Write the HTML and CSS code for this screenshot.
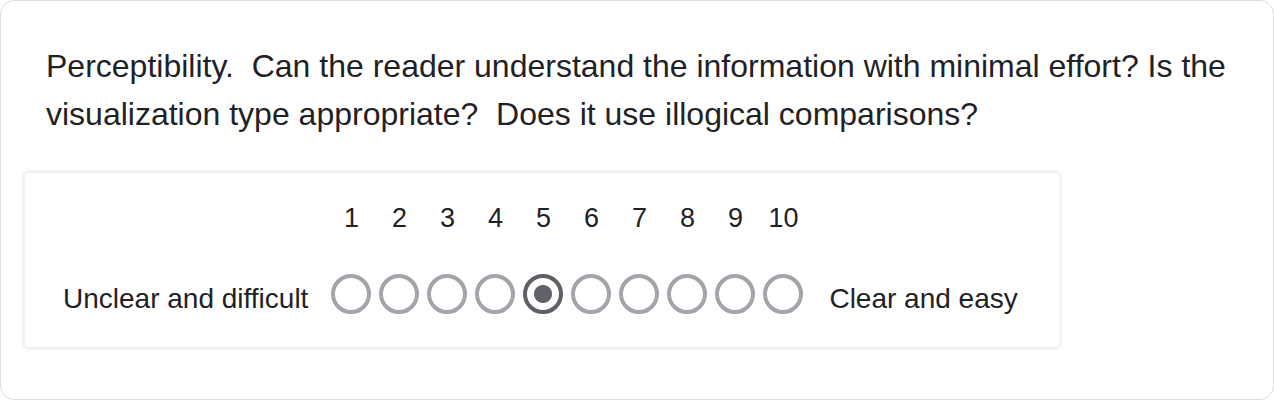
FILE: index.html
```html
<!DOCTYPE html>
<html lang="en">
<head>
<meta charset="utf-8">
<title>Rating</title>
<link rel="stylesheet" href="styles.css">
</head>
<body>
<div class="card">
  <p class="question">Perceptibility.&nbsp; Can the reader understand the information with minimal effort? Is the visualization type appropriate?&nbsp; Does it use illogical comparisons?</p>
  <div class="scale-box">
    <div class="scale">
      <span class="spacer"></span>
      <span class="num">1</span><span class="num">2</span><span class="num">3</span><span class="num">4</span><span class="num">5</span><span class="num">6</span><span class="num">7</span><span class="num">8</span><span class="num">9</span><span class="num">10</span>
      <span class="spacer"></span>

      <span class="label label-left">Unclear and difficult</span>
      <input class="radio" type="radio" name="perc" value="1" aria-label="1">
      <input class="radio" type="radio" name="perc" value="2" aria-label="2">
      <input class="radio" type="radio" name="perc" value="3" aria-label="3">
      <input class="radio" type="radio" name="perc" value="4" aria-label="4">
      <input class="radio" type="radio" name="perc" value="5" aria-label="5" checked>
      <input class="radio" type="radio" name="perc" value="6" aria-label="6">
      <input class="radio" type="radio" name="perc" value="7" aria-label="7">
      <input class="radio" type="radio" name="perc" value="8" aria-label="8">
      <input class="radio" type="radio" name="perc" value="9" aria-label="9">
      <input class="radio" type="radio" name="perc" value="10" aria-label="10">
      <span class="label label-right">Clear and easy</span>
    </div>
  </div>
</div>
</body>
</html>
```

FILE: styles.css
```css
html, body {
  margin: 0;
  padding: 0;
  background: #ffffff;
}

body {
  font-family: "Liberation Sans", Arial, Helvetica, sans-serif;
  color: #1f2225;
}

.card {
  box-sizing: border-box;
  width: 1274px;
  height: 400px;
  border: 1px solid #dcdde0;
  border-radius: 14px;
  padding: 41px 0 0 21px;
  overflow: hidden;
}

.question {
  margin: 0 0 32px 24px;
  font-size: 32px;
  line-height: 48px;
  width: 1200px;
}

.scale-box {
  box-sizing: border-box;
  width: 1040px;
  height: 180px;
  border: 3px solid #f3f3f4;
  border-radius: 7px;
  padding: 30px 0 0 38px;
}

.scale {
  display: grid;
  grid-template-columns: auto repeat(10, 40px) auto;
  justify-content: start;
  column-gap: 8px;
  row-gap: 41px;
  align-items: end;
}

.num {
  font-size: 27px;
  line-height: 30px;
  text-align: center;
  white-space: nowrap;
}

.label {
  font-size: 28px;
  white-space: nowrap;
}

.label-left {
  margin-right: 15px;
}

.label-right {
  margin-left: 18px;
}

.radio {
  appearance: none;
  -webkit-appearance: none;
  box-sizing: border-box;
  width: 40px;
  height: 40px;
  margin: 0 0 1px 0;
  border: 4px solid #a2a6aa;
  border-radius: 50%;
  background: #ffffff;
}

.radio:checked {
  border-color: #5d6064;
  background: radial-gradient(circle, #5f6266 0, #5f6266 8.5px, #ffffff 9.5px);
}
```
